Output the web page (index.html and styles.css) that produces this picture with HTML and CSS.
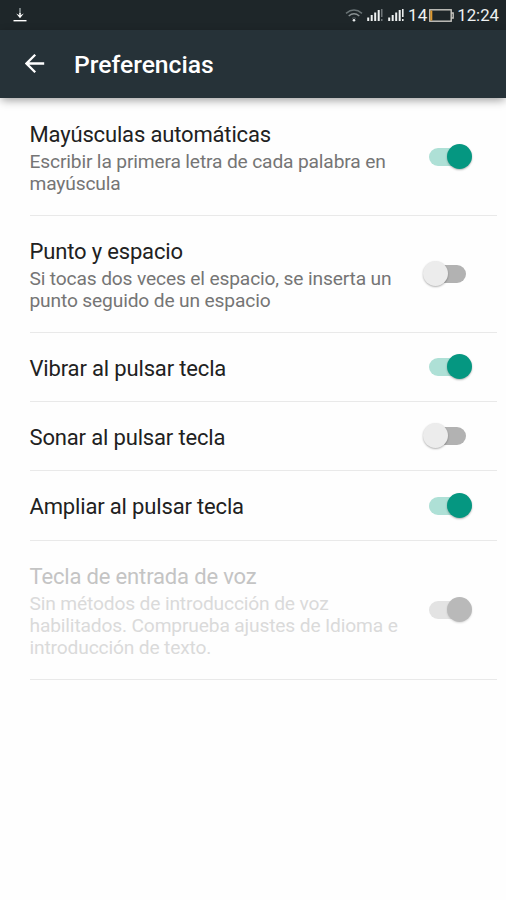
FILE: index.html
```html
<!DOCTYPE html>
<html lang="es">
<head>
<meta charset="utf-8">
<title>Preferencias</title>
<link rel="stylesheet" href="styles.css">
</head>
<body>
<div class="status">
  <svg class="download" width="14" height="14" viewBox="0 0 14 14"><path d="M7 0v6" fill="none" stroke="#a5adaf" stroke-width="1.300"/><path d="M7 5v4" stroke="#fff" stroke-width="1.500"/><path d="M3.200 5.600 7 10.200l3.800-4.600L7 7.600z" fill="#fff"/><path d="M.5 12.700h13" stroke="#fff" stroke-width="1.400"/></svg>
  <div class="indicators">
    <svg class="wifi" width="18" height="13" viewBox="0 0 18 13" fill="none" stroke-width="1.500"><path d="M1 4.300Q9-2.300 17 4.300" stroke="#697375"/><path d="M3.700 7Q9 2.700 14.300 7" stroke="#899193"/><path d="M7 9.400Q9 8.200 11 9.400" stroke="#586265" stroke-width="1"/><circle cx="9" cy="11.300" r="1.300" fill="#e8ebec"/></svg>
    <svg class="signal" width="16" height="12" viewBox="0 0 16 12"><path d="M1.200 12V8.500M4.700 12V6M8.200 12V3.500M11.700 12V1" stroke="#eef1f1" stroke-width="2"/><path d="M14.800 0v8M14.800 10v2" stroke="#7c8486" stroke-width="1.300"/></svg>
    <svg class="signal second" width="16" height="12" viewBox="0 0 16 12"><path d="M1.200 12V8.500M4.700 12V6M8.200 12V3.500M11.700 12V1" stroke="#eef1f1" stroke-width="2"/><path d="M14.800 0v8M14.800 10v2" stroke="#f5f7f7" stroke-width="1.500"/></svg>
    <span class="level">14</span>
    <svg class="battery" width="25" height="13" viewBox="0 0 25 13"><rect x=".8" y=".8" width="21.400" height="11.400" fill="none" stroke="#c9c8c2" stroke-width="1.400"/><path d="M22.200 4h2v5h-2" fill="none" stroke="#c9c8c2" stroke-width="1.300"/><path d="M2.300 1.500v10" stroke="#dc982f" stroke-width="2"/></svg>
    <span class="clock">12:24</span>
  </div>
</div>
<header class="toolbar">
  <svg class="back" width="20" height="20" viewBox="0 0 20 20" fill="none" stroke="#fff" stroke-width="2.300"><path d="M19.200 9.500H1.800M10.200.8 1.500 9.500l8.700 8.700"/></svg>
  <h1>Preferencias</h1>
</header>
<main>
  <section class="row first">
    <div class="text"><h2>Mayúsculas automáticas</h2><p>Escribir la primera letra de cada palabra en<br>mayúscula</p></div>
    <span class="switch on"></span>
  </section>
  <section class="row">
    <div class="text"><h2>Punto y espacio</h2><p>Si tocas dos veces el espacio, se inserta un<br>punto seguido de un espacio</p></div>
    <span class="switch"></span>
  </section>
  <section class="row single">
    <div class="text"><h2>Vibrar al pulsar tecla</h2></div>
    <span class="switch on"></span>
  </section>
  <section class="row single">
    <div class="text"><h2>Sonar al pulsar tecla</h2></div>
    <span class="switch"></span>
  </section>
  <section class="row single taller">
    <div class="text"><h2>Ampliar al pulsar tecla</h2></div>
    <span class="switch on"></span>
  </section>
  <section class="row disabled">
    <div class="text"><h2>Tecla de entrada de voz</h2><p>Sin métodos de introducción de voz<br>habilitados. Comprueba ajustes de Idioma e<br>introducción de texto.</p></div>
    <span class="switch on"></span>
  </section>
</main>
</body>
</html>
```
FILE: styles.css
```css
* { box-sizing: border-box; }
body {
  margin: 0;
  height: 900px;
  overflow: hidden;
  background: #fefefe;
  font-family: Roboto, sans-serif;
}
h1, h2, p { margin: 0; font-weight: 400; white-space: nowrap; }
svg { display: block; flex: none; }

.status {
  height: 30px;
  padding: 0 7px 0 13px;
  display: flex;
  align-items: center;
  justify-content: space-between;
  background: #1e2629;
  color: #eef1f1;
  font-size: 17px;
}
.indicators { display: flex; align-items: center; }
.signal { margin-left: 4px; }
.second { margin-left: 5px; }
.level { margin-left: 4px; }
.battery { margin-left: 2px; }
.clock { margin-left: 3px; font-size: 16.800px; }

.toolbar {
  height: 68px;
  padding: 1px 0 0 25px;
  display: flex;
  align-items: center;
  gap: 29px;
  background: #263238;
  box-shadow: 0 3px 9px -1px rgba(0, 0, 0, .4);
}
.toolbar h1 {
  color: #fff;
  font-size: 24.700px;
  font-weight: 500;
}
.back { margin-top: -1px; }

.row {
  height: 117px;
  margin-left: 30px;
  margin-right: 9px;
  padding-right: 24px;
  display: flex;
  align-items: center;
  justify-content: space-between;
  border-bottom: 1px solid #e9e9e9;
}
.first { height: 118px; padding-top: 1px; }
.single { height: 69px; }
.taller { height: 70px; }
.disabled { height: 139px; }
.text { margin-left: -.5px; }
h2 {
  color: #212121;
  font-size: 22px;
  line-height: 28px;
  letter-spacing: -.16px;
}
.single h2 { padding-top: 3px; }
.taller h2 { padding-top: 2px; }
p {
  margin-top: 2px;
  margin-bottom: -1px;
  color: #757575;
  font-size: 19.200px;
  line-height: 22px;
  letter-spacing: -.15px;
}
.disabled h2 { color: #c4c4c4; }
.disabled p { color: #dadada; }

.switch {
  flex: none;
  position: relative;
  width: 51px;
  height: 26px;
}
.switch::before {
  content: "";
  position: absolute;
  left: 8px;
  top: 4px;
  width: 36px;
  height: 18px;
  border-radius: 9px;
  background: #b2b2b2;
}
.switch::after {
  content: "";
  position: absolute;
  left: 1px;
  top: 0;
  width: 25px;
  height: 25px;
  border-radius: 50%;
  background: #ececec;
  box-shadow: 0 1px 2px rgba(0, 0, 0, .3);
}
.on::before { left: 7px; background: #aee0d6; }
.on::after { left: 25px; background: #059781; }
.disabled .switch::before { background: #e3e3e3; }
.disabled .switch::after { background: #b9b9b9; box-shadow: 0 1px 2px rgba(0, 0, 0, .15); }
```
